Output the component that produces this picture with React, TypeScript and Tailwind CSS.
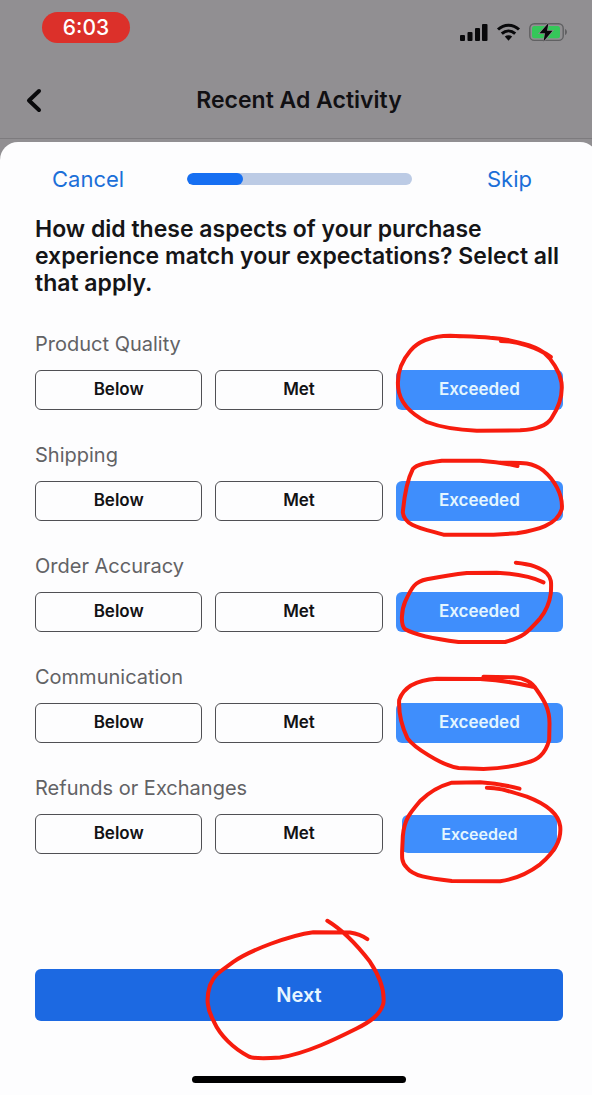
import { FC, useState } from "react";
import clsx from "clsx";

interface Aspect {
  name: string;
  // marker stroke around the last option, drawn at 3 units per pixel
  markBox: string;
  mark: string;
}

const options = ["Below", "Met", "Exceeded"];

const aspects: Aspect[] = [
  {
    name: "Product Quality",
    markBox: "48 147 501 120",
    mark: "M510 106 C460 74 400 55 330 50 C290 46 250 46 210 44 C150 44 110 65 90 90 C60 125 50 160 54 200 C58 240 85 275 140 303 C190 322 240 327 290 329 L420 328 C470 325 500 315 515 290 C535 260 548 220 544 185 C538 150 515 115 490 94 C460 72 400 58 362 60 C410 60 470 78 512 108",
  },
  {
    name: "Shipping",
    markBox: "48 121 501 120",
    mark: "M412 76 C370 66 330 62 300 60 L185 60 C140 66 110 70 98 85 C80 120 72 170 68 215 C72 255 120 262 190 282 L340 282 L410 278 C470 268 530 255 545 205 C549 160 520 115 490 90 C450 60 410 67 360 66",
  },
  {
    name: "Order Accuracy",
    markBox: "48 126 501 120",
    mark: "M407 38 C450 42 480 50 500 70 C514 85 514 95 512 130 C508 160 500 180 480 205 C440 250 430 260 375 276 L235 276 C170 268 110 258 75 238 C60 225 64 180 75 155 C95 110 105 95 140 88 C180 80 230 72 260 69 L350 68 C400 71 450 78 490 97",
  },
  {
    name: "Communication",
    markBox: "48 129 501 120",
    mark: "M310 50 L400 52 C430 54 455 65 470 90 C495 125 508 150 508 190 L507 240 C495 285 470 300 440 308 C400 320 370 325 310 327 L235 324 C180 315 100 260 82 235 C65 200 55 160 57 120 C70 80 110 60 170 56 L300 57 C350 60 400 66 455 80",
  },
  {
    name: "Refunds or Exchanges",
    markBox: "48 134 501 120",
    mark: "M320 55 C350 55 370 60 440 82 C500 105 535 135 540 170 C545 215 520 250 480 285 C440 315 400 330 360 336 L215 335 C140 326 100 320 80 295 C60 275 66 260 68 200 C72 150 90 130 120 95 C150 65 180 50 215 40 L300 39 C350 42 380 48 418 58",
  },
];

const nextMark =
  "M412 62 C450 85 490 120 540 185 C570 230 585 270 580 310 C570 345 540 365 500 385 C440 415 350 460 270 472 C230 475 190 477 175 468 C130 445 90 405 72 365 C50 325 48 295 60 255 C75 220 90 215 130 185 C180 150 300 105 370 96 L480 97 C500 100 515 105 532 117";

const Marker: FC<{ box: string; path: string }> = ({ box, path }) => (
  <svg
    aria-hidden="true"
    viewBox={box}
    className="pointer-events-none absolute inset-0 z-10 size-full overflow-visible"
  >
    <path
      d={path}
      fill="none"
      stroke="#f71c0e"
      strokeWidth="12"
      strokeLinecap="round"
      strokeLinejoin="round"
    />
  </svg>
);

const StatusIcons = () => (
  <svg
    aria-hidden="true"
    viewBox="0 0 108 20"
    className="mt-[11px] h-5 w-[108px]"
    fill="#09090b"
  >
    <rect x="0" y="12" width="5" height="6" rx="1" />
    <rect x="7.5" y="9" width="5" height="9" rx="1" />
    <rect x="15" y="5" width="5" height="13" rx="1" />
    <rect x="22" y="1" width="5.5" height="17" rx="1" />
    <path
      d="M38 6.5 C44 0.8 53 0.8 59 6.5 M41.8 10.6 C45.8 7 51.2 7 55.2 10.6"
      fill="none"
      stroke="#09090b"
      strokeWidth="3"
    />
    <path d="M44.8 13.6 C47 11.8 50 11.8 52.2 13.6 L48.5 17.8 Z" />
    <rect
      x="69.8"
      y="0.8"
      width="33.4"
      height="16.6"
      rx="4.5"
      fill="none"
      stroke="#606062"
      strokeWidth="1.4"
    />
    <rect x="72" y="3" width="28" height="12.2" rx="2.5" fill="#35c759" />
    <path d="M105 6 C107.6 7 107.6 11 105 12 Z" fill="#606062" />
    <path
      d="M88.5 0 L79.5 10.3 H85 L83.5 18.5 L92.5 7.8 H87 Z"
      stroke="#918f92"
      strokeWidth="1.4"
      paintOrder="stroke"
    />
  </svg>
);

const App = () => {
  const [answers, setAnswers] = useState<Record<string, string>>(
    Object.fromEntries(aspects.map((a) => [a.name, "Exceeded"]))
  );

  return (
    <div className="min-h-screen overflow-hidden bg-[#918f92] font-['Inter','Liberation_Sans',sans-serif]">
      {/* the phone screen runs slightly past the right edge */}
      <div className="-mr-1.5 flex min-h-screen flex-col">
        <header className="border-b border-[#7d7b7e] pb-5">
          <div className="flex items-start justify-between pt-3 pr-[30px] pl-[42px]">
            <time className="flex h-[31px] w-[88px] items-center justify-center rounded-full bg-[#dc302a] text-[21px] font-medium text-white">
              6:03
            </time>
            <StatusIcons />
          </div>
          <div className="mt-10 grid grid-cols-[44px_1fr_44px] items-center px-3">
            <button aria-label="Back" className="flex h-8 items-center pl-3">
              <svg
                viewBox="0 0 20 26"
                className="h-[26px] w-5"
                fill="none"
                stroke="#09090b"
                strokeWidth="4"
                strokeLinecap="round"
                strokeLinejoin="round"
              >
                <path d="M15 4 L5 13.5 L15 23" />
              </svg>
            </button>
            <h1 className="text-center text-[23px] font-semibold text-[#111013]">
              Recent Ad Activity
            </h1>
          </div>
        </header>

        <main className="mt-[3px] flex flex-1 flex-col rounded-t-[18px] bg-[#fdfdfe] px-[35px] pb-3">
          <div className="grid grid-cols-[1fr_225px_1fr] items-center pt-[21px] text-[22px] leading-8 text-[#1b6fd8]">
            <button className="justify-self-start pl-[17px]">Cancel</button>
            <div
              role="progressbar"
              aria-label="Survey progress"
              aria-valuenow={25}
              className="h-3 overflow-hidden rounded-full bg-[#bccbe5]"
            >
              <div className="h-full w-1/4 rounded-full bg-[#166ff2]" />
            </div>
            <button className="justify-self-end pr-[31px]">Skip</button>
          </div>

          <h2 className="mt-[21px] text-[23px] leading-[27px] font-semibold text-[#151517]">
            How did these aspects of your purchase experience match your
            expectations? Select all that apply.
          </h2>

          <div className="mt-[34px] flex flex-col gap-8">
            {aspects.map((aspect, i) => (
              <div key={aspect.name} role="group" aria-labelledby={`aspect-${i}`}>
                <p
                  id={`aspect-${i}`}
                  className="text-xl leading-[27px] text-[#626265]"
                >
                  {aspect.name}
                </p>
                <div className="mt-3 grid grid-cols-3 gap-[13px]">
                  {options.map((option) => {
                    const selected = answers[aspect.name] === option;
                    const pressed = selected && i === aspects.length - 1;
                    return (
                      <div key={option} className="relative flex h-10">
                        <button
                          aria-pressed={selected}
                          onClick={() =>
                            setAnswers({ ...answers, [aspect.name]: option })
                          }
                          className={clsx(
                            "flex-1 rounded-md font-semibold",
                            selected
                              ? "bg-[#3f8efc] text-[#e4f6ff]"
                              : "border border-[#505054] text-[#121214]",
                            pressed ? "mx-[6px] my-px text-base" : "text-[17px]"
                          )}
                        >
                          {option}
                        </button>
                        {option === "Exceeded" && (
                          <Marker box={aspect.markBox} path={aspect.mark} />
                        )}
                      </div>
                    );
                  })}
                </div>
              </div>
            ))}
          </div>

          <div className="relative mt-[115px] flex">
            <button className="h-[52px] flex-1 rounded-md bg-[#1c69e2] text-xl font-semibold text-[#e8f6ff]">
              Next
            </button>
            <Marker box="-465 208 1584 153" path={nextMark} />
          </div>

          <div className="mx-auto mt-auto h-[7px] w-[214px] rounded-full bg-black" />
        </main>
      </div>
    </div>
  );
};

export default App;
